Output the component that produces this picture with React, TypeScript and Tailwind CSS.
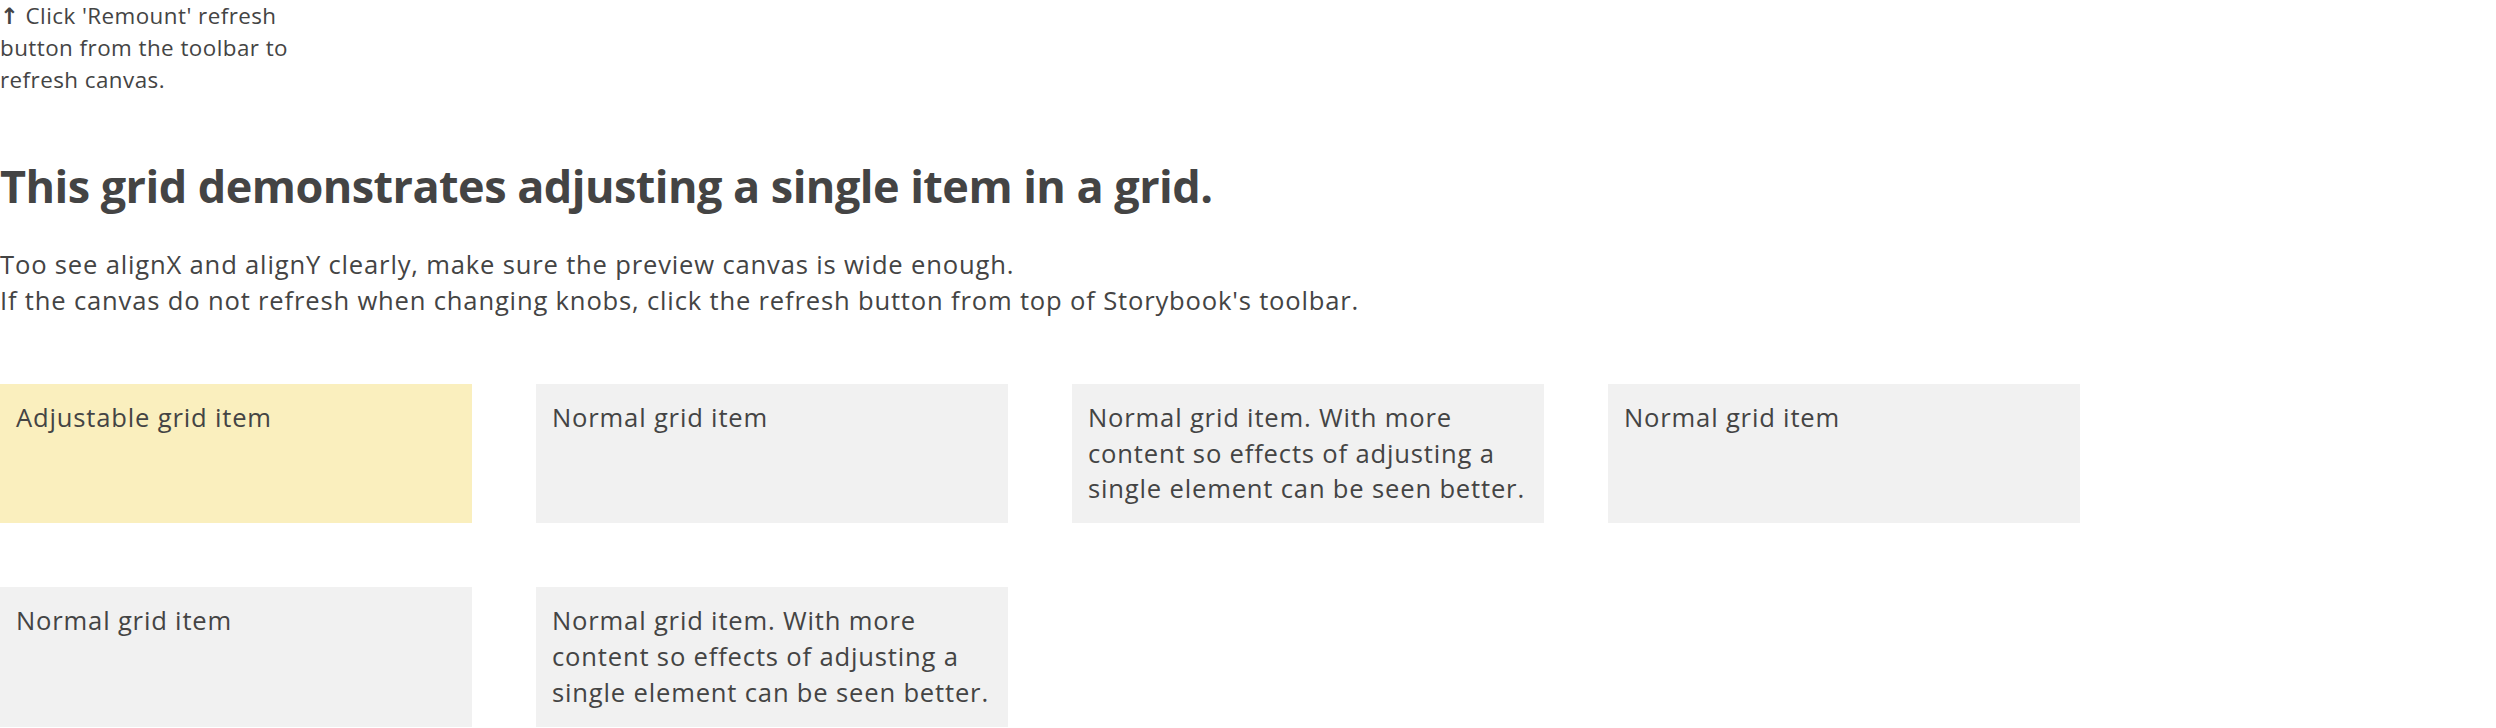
const items = [
  { text: "Adjustable grid item", adjustable: true },
  { text: "Normal grid item" },
  { text: "Normal grid item. With more content so effects of adjusting a single element can be seen better." },
  { text: "Normal grid item" },
  { text: "Normal grid item" },
  { text: "Normal grid item. With more content so effects of adjusting a single element can be seen better." },
];

export default function App() {
  return (
    <div className="min-h-screen bg-white text-[#444] font-['Open_Sans',sans-serif]">
      <div className="text-[22.4px] leading-[1.4] tracking-[0.02em]">
        <span className="font-['DejaVu_Sans',sans-serif] font-bold">↑</span> Click 'Remount' refresh
        <br />
        button from the toolbar to
        <br />
        refresh canvas.
      </div>

      <h1 className="mt-[64px] text-[45px] font-bold leading-[1.2] tracking-[-0.012em]">
        This grid demonstrates adjusting a single item in a grid.
      </h1>

      <p className="mt-[34px] text-[25.6px] leading-[1.4] tracking-[0.032em]">
        Too see alignX and alignY clearly, make sure the preview canvas is wide enough.
        <br />
        If the canvas do not refresh when changing knobs, click the refresh button from top of Storybook's toolbar.
      </p>

      <div className="mt-[65px] grid grid-cols-[repeat(4,472px)] gap-[64px]">
        {items.map((item, i) => (
          <div
            key={i}
            className={
              "p-[16px] text-[25.6px] leading-[1.4] tracking-[0.032em] " +
              (item.adjustable ? "bg-[#faefbe]" : "bg-[#f1f1f1]")
            }
          >
            {item.text}
          </div>
        ))}
      </div>
    </div>
  );
}
